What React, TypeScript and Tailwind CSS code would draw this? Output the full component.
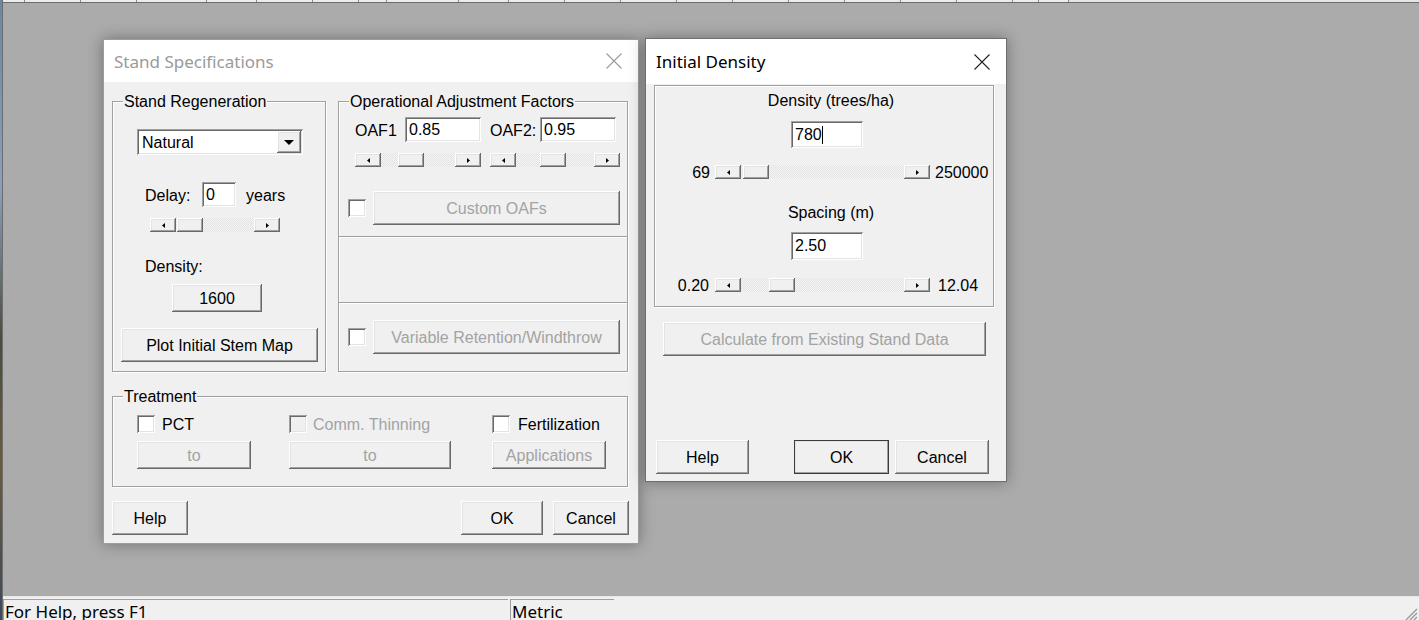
import React from 'react';

const raised = 'bg-[#f0f0f0] shadow-[inset_-1px_-1px_#696969,inset_1px_1px_#ffffff,inset_-2px_-2px_#a0a0a0,inset_2px_2px_#e3e3e3]';
const sunken = 'bg-white shadow-[inset_1px_1px_#a0a0a0,inset_-1px_-1px_#ffffff,inset_2px_2px_#696969,inset_-2px_-2px_#e3e3e3]';
const frame = 'relative border border-[#a0a0a0] shadow-[inset_1px_1px_#ffffff,1px_1px_#ffffff]';

function Btn({ w, h, children, disabled, def, className = '' }: { w: number; h: number; children: React.ReactNode; disabled?: boolean; def?: boolean; className?: string }) {
    return (
        <div
            className={`flex items-center justify-center shrink-0 ${raised} ${def ? 'outline outline-1 outline-[#3c3c3c] -outline-offset-1' : ''} ${disabled ? 'text-[#a3a3a3]' : 'text-black'} ${className}`}
            style={{ width: w, height: h }}
        >
            <span className="mt-[2px]">{children}</span>
        </div>
    );
}

function Edit({ w, h, value, caret, className = '' }: { w: number; h: number; value: string; caret?: boolean; className?: string }) {
    return (
        <div className={`flex items-center pl-[4px] shrink-0 ${sunken} ${className}`} style={{ width: w, height: h }}>
            <span className="leading-none">{value}</span>
            {caret && <span className="w-px h-[18px] bg-black" />}
        </div>
    );
}

function Check({ disabled, className = '' }: { disabled?: boolean; className?: string }) {
    return (
        <div
            className={`w-[18px] h-[18px] shrink-0 ${disabled ? 'bg-[#f0f0f0]' : 'bg-white'} shadow-[inset_1px_1px_#a0a0a0,inset_-1px_-1px_#ffffff,inset_2px_2px_#696969,inset_-2px_-2px_#e3e3e3] ${className}`}
        />
    );
}

function ArrowBtn({ dir }: { dir: 'l' | 'r' }) {
    return (
        <div className={`w-[26px] h-full flex items-center justify-center shrink-0 ${raised}`}>
            <svg width="3" height="5" viewBox="0 0 3 5">
                {dir === 'l' ? <polygon points="3,0 3,5 0,2.5" fill="#000" /> : <polygon points="0,0 0,5 3,2.5" fill="#000" />}
            </svg>
        </div>
    );
}

function Scroll({ w, thumb, className = '' }: { w: number; thumb: number; className?: string }) {
    return (
        <div className={`flex h-[14px] shrink-0 ${className}`} style={{ width: w }}>
            <ArrowBtn dir="l" />
            <div className="flex-1 h-full bg-[repeating-conic-gradient(#f6f6f6_0%_25%,#e2e2e2_0%_50%)] bg-size-[2px_2px]">
                <div className={`w-[26px] h-full ${raised}`} style={{ marginLeft: thumb }} />
            </div>
            <ArrowBtn dir="r" />
        </div>
    );
}

function GroupLabel({ children }: { children: React.ReactNode }) {
    return <span className="absolute -top-[9px] left-[10px] bg-[#f0f0f0] px-[1px] leading-[18px]">{children}</span>;
}

function CloseX({ color }: { color: string }) {
    return (
        <svg width="16" height="16" viewBox="0 0 16 16">
            <path d="M0.5 0.5L15.5 15.5M15.5 0.5L0.5 15.5" stroke={color} strokeWidth="1.1" />
        </svg>
    );
}

function StandSpecifications() {
    return (
        <div className="absolute left-[103px] top-[39px] w-[536px] h-[505px] flex flex-col bg-[#f0f0f0] border border-[#9c9c9c] shadow-[0_0_14px_rgba(0,0,0,0.35)]">
            <div className="h-[42px] shrink-0 bg-white flex items-center justify-between pl-[10px] pr-[16px] font-['Noto_Sans',sans-serif] text-[17px] text-[#9a9a9a]">
                <span className="mt-[2px]">Stand Specifications</span>
                <CloseX color="#9a9a9a" />
            </div>
            <div className="flex flex-col pl-[8px] pt-[19px]">
                <div className="flex gap-[12px] h-[271px]">
                    {/* Stand Regeneration */}
                    <div className={`${frame} w-[214px] h-full flex flex-col`}>
                        <GroupLabel>Stand Regeneration</GroupLabel>
                        <div className={`mt-[27px] ml-[24px] w-[166px] h-[26px] flex items-center justify-between ${sunken}`}>
                            <span className="pl-[5px] mt-[2px]">Natural</span>
                            <div className={`w-[24px] h-[22px] mr-[2px] flex items-center justify-center ${raised}`}>
                                <svg width="10" height="5" viewBox="0 0 10 5"><polygon points="0,0 10,0 5,5" fill="#000" /></svg>
                            </div>
                        </div>
                        <div className="mt-[27px] h-[25px] flex items-center">
                            <span className="ml-[32px] w-[57px] mt-[3px]">Delay:</span>
                            <Edit w={34} h={25} value="0" />
                            <span className="ml-[10px] mt-[3px]">years</span>
                        </div>
                        <Scroll w={130} thumb={1} className="mt-[11px] ml-[37px]" />
                        <span className="mt-[26px] ml-[32px] leading-[18px]">Density:</span>
                        <Btn w={90} h={28} className="mt-[8px] ml-[59px]">1600</Btn>
                        <Btn w={197} h={34} className="mt-[16px] ml-[8px]">Plot Initial Stem Map</Btn>
                    </div>

                    {/* Operational Adjustment Factors */}
                    <div className="w-[290px] flex flex-col">
                        <div className={`${frame} h-[136px] flex flex-col`}>
                            <GroupLabel>Operational Adjustment Factors</GroupLabel>
                            <div className="mt-[15px] h-[25px] flex items-center">
                                <span className="ml-[16px] w-[50px] mt-[2px]">OAF1</span>
                                <Edit w={76} h={25} value="0.85" />
                                <span className="ml-[9px] w-[50px] mt-[2px]">OAF2:</span>
                                <Edit w={76} h={25} value="0.95" />
                            </div>
                            <div className="mt-[11px] flex">
                                <Scroll w={126} thumb={17} className="ml-[16px]" />
                                <Scroll w={130} thumb={24} className="ml-[9px]" />
                            </div>
                            <div className="mt-[24px] h-[34px] flex items-center">
                                <Check className="ml-[9px]" />
                                <Btn w={247} h={34} disabled className="ml-[7px]">Custom OAFs</Btn>
                            </div>
                        </div>
                        <div className={`${frame} h-[68px] -mt-px`} />
                        <div className={`${frame} h-[70px] -mt-px flex flex-col`}>
                            <div className="mt-[17px] h-[34px] flex items-center">
                                <Check className="ml-[9px]" />
                                <Btn w={247} h={34} disabled className="ml-[7px]">Variable Retention/Windthrow</Btn>
                            </div>
                        </div>
                    </div>
                </div>

                {/* Treatment */}
                <div className={`${frame} mt-[24px] w-[516px] h-[91px] flex flex-col`}>
                    <GroupLabel>Treatment</GroupLabel>
                    <div className="mt-[18px] h-[18px] flex items-center">
                        <div className="ml-[24px] w-[152px] flex items-center">
                            <Check />
                            <span className="ml-[7px] mt-[2px]">PCT</span>
                        </div>
                        <div className="w-[203px] flex items-center">
                            <Check disabled />
                            <span className="ml-[6px] mt-[2px] text-[#a3a3a3]">Comm. Thinning</span>
                        </div>
                        <div className="flex items-center">
                            <Check />
                            <span className="ml-[8px] mt-[2px]">Fertilization</span>
                        </div>
                    </div>
                    <div className="mt-[8px] flex">
                        <div className="ml-[24px] w-[152px]"><Btn w={114} h={28} disabled>to</Btn></div>
                        <div className="w-[203px]"><Btn w={162} h={28} disabled>to</Btn></div>
                        <Btn w={114} h={28} disabled>Applications</Btn>
                    </div>
                </div>

                <div className="mt-[14px] w-[517px] flex">
                    <Btn w={76} h={34}>Help</Btn>
                    <div className="flex-1" />
                    <Btn w={82} h={34}>OK</Btn>
                    <Btn w={76} h={34} className="ml-[10px]">Cancel</Btn>
                </div>
            </div>
        </div>
    );
}

function InitialDensity() {
    return (
        <div className="absolute left-[645px] top-[38px] w-[362px] h-[444px] flex flex-col bg-[#f0f0f0] border border-[#6e6e6e] shadow-[0_0_14px_rgba(0,0,0,0.35)]">
            <div className="h-[45px] shrink-0 bg-white flex items-center justify-between pl-[10px] pr-[16px] font-['Noto_Sans',sans-serif] text-[17px] text-black">
                <span>Initial Density</span>
                <CloseX color="#222" />
            </div>
            <div className="flex flex-col pl-[8px] pt-px">
                <div className={`${frame} w-[340px] h-[222px] flex flex-col`}>
                    <span className="mt-[6px] leading-[18px] text-center pl-[14px]">Density (trees/ha)</span>
                    <Edit w={72} h={27} value="780" caret className="mt-[11px] ml-[136px]" />
                    <div className="mt-[17px] h-[14px] flex items-center">
                        <span className="w-[55px] text-right mt-[2px]">69</span>
                        <Scroll w={215} thumb={2} className="ml-[5px]" />
                        <span className="ml-[5px] mt-[2px]">250000</span>
                    </div>
                    <span className="mt-[25px] leading-[18px] text-center pl-[14px]">Spacing (m)</span>
                    <Edit w={72} h={28} value="2.50" className="mt-[10px] ml-[136px]" />
                    <div className="mt-[18px] h-[14px] flex items-center">
                        <span className="w-[54px] text-right mt-[2px]">0.20</span>
                        <Scroll w={215} thumb={28} className="ml-[6px]" />
                        <span className="ml-[8px] mt-[2px]">12.04</span>
                    </div>
                </div>
                <Btn w={323} h={34} disabled className="mt-[15px] ml-[9px]">Calculate from Existing Stand Data</Btn>
                <div className="mt-[84px] flex">
                    <Btn w={93} h={34} className="ml-[2px]">Help</Btn>
                    <Btn w={95} h={34} def className="ml-[45px]">OK</Btn>
                    <Btn w={94} h={34} className="ml-[6px]">Cancel</Btn>
                </div>
            </div>
        </div>
    );
}

export default function App() {
    const toolbar = [22, 56, 56, 70, 50, 56, 46, 28, 72, 50, 56, 56, 56, 56, 56, 56, 56, 56, 56, 26, 30];

    return (
        <div className="relative w-[1419px] h-[620px] overflow-hidden flex bg-[#ababab] font-['Liberation_Sans',Arial,sans-serif] text-[16px] text-black">
            {/* desktop sliver */}
            <div className="w-[2px] h-full shrink-0 bg-[linear-gradient(#6d86a6_0%,#8aa0bc_30%,#4a4d3e_55%,#6b5a3c_75%,#3c4a5c_100%)]" />

            <div className="flex-1 flex flex-col border-l border-[#6d6d6d]">
                {/* toolbar remnant */}
                <div className="h-[3px] shrink-0 flex bg-[#e6e6e6] border-b border-[#6d6d6d]">
                    {toolbar.map((w, i) => (
                        <div key={i} className="h-full border-r border-[#8a8a8a] bg-[#ececec]" style={{ width: w }} />
                    ))}
                </div>

                {/* MDI client area */}
                <div className="flex-1 bg-[#ababab] border-b border-[#e8e8e8]" />

                {/* status bar */}
                <div className="h-[23px] shrink-0 bg-[#f0f0f0] flex items-start pt-[2px] font-['Noto_Sans',sans-serif] text-[17px] relative">
                    <div className="w-[505px] h-[21px] border-t border-l border-[#a0a0a0] pl-px leading-[24px] overflow-hidden">For Help, press F1</div>
                    <div className="ml-[2px] w-[104px] h-[21px] border-t border-l border-[#a0a0a0] pl-px leading-[24px] overflow-hidden">Metric</div>
                    <svg className="absolute right-[1px] bottom-0" width="14" height="13" viewBox="0 0 14 13">
                        <path d="M13 2L2 13M13 6L6 13M13 10L10 13" stroke="#9a9a9a" strokeWidth="1.4" />
                    </svg>
                </div>
            </div>

            <StandSpecifications />
            <InitialDensity />
        </div>
    );
}
